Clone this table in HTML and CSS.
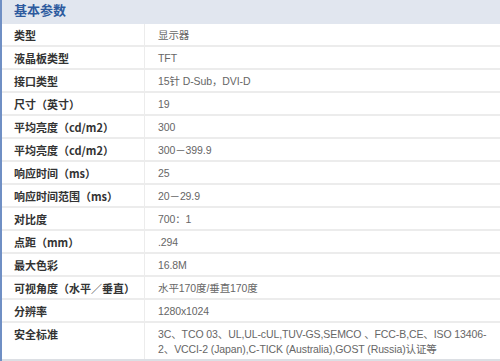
FILE: index.html
```html
<!DOCTYPE html>
<html lang="zh-CN">
<head>
<meta charset="utf-8">
<title>基本参数</title>
<link rel="stylesheet" href="styles.css">
</head>
<body>
<div class="panel">
  <div class="panel-head">基本参数</div>
  <table class="spec">
    <tbody>
      <tr><th>类型</th><td>显示器</td></tr>
      <tr><th>液晶板类型</th><td>TFT</td></tr>
      <tr><th>接口类型</th><td>15针 D-Sub，DVI-D</td></tr>
      <tr><th>尺寸（英寸）</th><td>19</td></tr>
      <tr><th>平均亮度（cd/m2）</th><td>300</td></tr>
      <tr><th>平均亮度（cd/m2）</th><td>300－399.9</td></tr>
      <tr><th>响应时间（ms）</th><td>25</td></tr>
      <tr><th>响应时间范围（ms）</th><td>20－29.9</td></tr>
      <tr><th>对比度</th><td>700：1</td></tr>
      <tr><th>点距（mm）</th><td>.294</td></tr>
      <tr><th>最大色彩</th><td>16.8M</td></tr>
      <tr><th>可视角度（水平／垂直）</th><td>水平170度/垂直170度</td></tr>
      <tr><th>分辨率</th><td>1280x1024</td></tr>
      <tr class="tall"><th>安全标准</th><td>3C、TCO 03、UL,UL-cUL,TUV-GS,SEMCO 、FCC-B,CE、ISO 13406-2、VCCI-2 (Japan),C-TICK (Australia),GOST (Russia)认证等</td></tr>
    </tbody>
  </table>
</div>
</body>
</html>
```

FILE: styles.css
```css
html, body {
  margin: 0;
  padding: 0;
  background: #ffffff;
}

.panel {
  width: 500px;
  height: 361px;
  box-sizing: border-box;
  border-left: 2px solid #6f8fc4;
  background: #e9ecf1;
  overflow: hidden;
}

.panel-head {
  height: 23px;
  line-height: 23px;
  padding-left: 12px;
  background: #e1e6ef;
  color: #2d5a9e;
  font: bold 13px "Noto Sans CJK SC", sans-serif;
  border-bottom: 1px solid #e1e6ef;
}

.spec {
  width: 100%;
  border-collapse: collapse;
  background: #ffffff;
}

.spec th,
.spec td {
  height: 21px;
  padding: 0;
  border-bottom: 2px solid #ececec;
  vertical-align: middle;
  text-align: left;
  line-height: 14px;
}

.spec th {
  width: 130px;
  padding-left: 12px;
  border-right: 1px solid #ececec;
  color: #333333;
  font: bold 11px "Noto Sans CJK SC", sans-serif;
  line-height: 14px;
}

.spec td {
  padding-left: 13px;
  padding-right: 0;
  color: #666666;
  font: 10.5px "Liberation Sans", "Noto Sans CJK SC", sans-serif;
  letter-spacing: -0.1px;
  line-height: 14px;
}

.spec tr.tall th,
.spec tr.tall td {
  height: auto;
  vertical-align: top;
  padding-top: 4px;
  padding-bottom: 2px;
  line-height: 15px;
  border-bottom: 2px solid #dcdfe4;
}
```
